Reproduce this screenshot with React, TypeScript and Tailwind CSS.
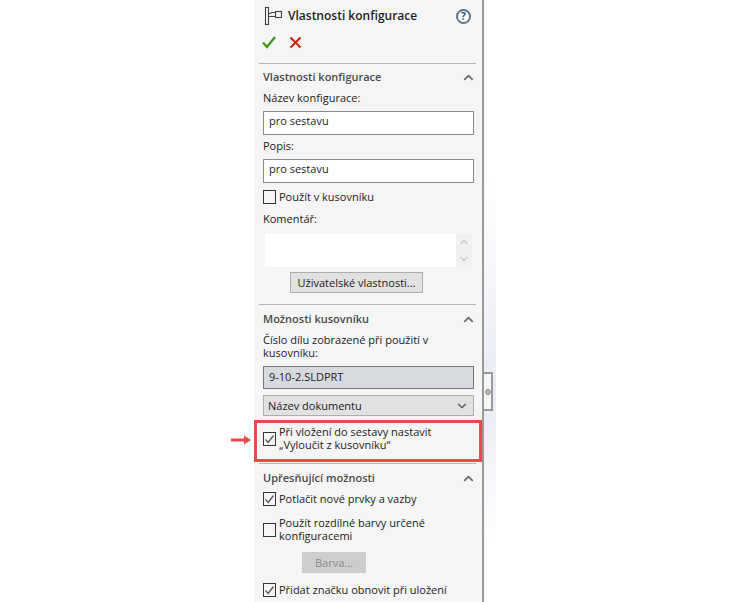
import { ChevronUp, ChevronDown } from 'lucide-react';

const Section = ({ title }: { title: string }) => (
  <div className="flex items-center justify-between h-[18px] -mr-[2px]">
    <span className="font-semibold text-[#4a4a4a]">{title}</span>
    <ChevronUp size={15} strokeWidth={3} className="text-[#707070]" />
  </div>
);

const Box = ({ children, checked }: { children: React.ReactNode; checked?: boolean }) => (
  <div className="flex items-center gap-[3px]">
    <div className="w-[13px] h-[14px] border border-[#333] bg-[#f5f5f5] shrink-0 flex items-center justify-center">
      {checked && (
        <svg width="11" height="11" viewBox="0 0 11 11" fill="none">
          <path d="M1.5 5.5 L4.2 8.5 L9.5 1.5" stroke="#555" strokeWidth="1.3" />
        </svg>
      )}
    </div>
    <span className="leading-[13px] -translate-y-px">{children}</span>
  </div>
);

export default function App() {
  return (
    <div className="w-[750px] h-[602px] bg-white overflow-hidden flex pl-[254px] relative font-['Open_Sans','Noto_Sans',sans-serif] text-[11px] text-[#222]">
      <div className="w-[230px] h-[602px] bg-[#f5f5f5] border-r-2 border-[#9a9a9a] flex flex-col pl-[9px] pr-[8px]">
        <div className="flex items-center h-[30px] pt-[2px]">
          <svg width="20" height="20" viewBox="0 0 20 20" fill="none" stroke="#444" strokeWidth="1.1" className="ml-[1px] shrink-0">
            <rect x="1.5" y="1.5" width="3" height="17" fill="#f5f5f5" />
            <path d="M4.5 10.5 H11 M4.5 8 L8 6.5 H11" />
            <rect x="11.5" y="5.5" width="6" height="6" fill="#f5f5f5" />
          </svg>
          <span className="ml-[4px] font-semibold text-[12px] text-[#1e1e1e]">Vlastnosti konfigurace</span>
          <div className="ml-auto mr-[3px] w-[15px] h-[15px] rounded-full border-2 border-[#5a7488] flex items-center justify-center text-[10px] font-bold text-[#35566f] leading-none bg-white">?</div>
        </div>
        <div className="flex items-center gap-[13px] h-[22px] mt-[1px] -ml-[1px]">
          <svg width="14" height="14" viewBox="0 0 14 14" fill="none">
            <path d="M1 7.5 L5 12 L13 2" stroke="#3f9b1f" strokeWidth="2.4" />
          </svg>
          <svg width="13" height="13" viewBox="0 0 13 13" fill="none">
            <path d="M1.5 1.5 L11.5 11.5 M11.5 1.5 L1.5 11.5" stroke="#c8220e" strokeWidth="2" />
          </svg>
        </div>
        <div className="h-px bg-[#b5b5b5] -ml-[4px] -mr-[2px] mt-[10px]" />
        <div className="mt-[4px]">
          <Section title="Vlastnosti konfigurace" />
        </div>
        <div className="mt-[5px] h-[14px] leading-[14px]">Název konfigurace:</div>
        <div className="mt-[6px] h-[24px] border border-[#8a8a8a] bg-white pl-[5px] leading-[17px]">pro sestavu</div>
        <div className="mt-[4px] h-[14px] leading-[14px]">Popis:</div>
        <div className="mt-[6px] h-[24px] border border-[#8a8a8a] bg-white pl-[5px] leading-[17px]">pro sestavu</div>
        <div className="mt-[7px]">
          <Box>Použít v kusovníku</Box>
        </div>
        <div className="mt-[8px] h-[14px] leading-[14px]">Komentář:</div>
        <div className="mt-[8px] ml-[2px] mr-[2px] h-[33px] bg-white flex justify-end">
          <div className="w-[16px] bg-[#f0f0f0] flex flex-col items-center justify-between py-[2px] text-[#c8c8c8]">
            <ChevronUp size={12} strokeWidth={3} />
            <ChevronDown size={12} strokeWidth={3} />
          </div>
        </div>
        <div className="mt-[5px] ml-[27px] w-[133px] h-[21px] bg-[#e1e1e1] border border-[#adadad] text-center leading-[19px]">Uživatelské vlastnosti...</div>
        <div className="h-px bg-[#b5b5b5] -ml-[4px] -mr-[2px] mt-[11px]" />
        <div className="mt-[5px]">
          <Section title="Možnosti kusovníku" />
        </div>
        <div className="mt-[5px] leading-[13px]">Číslo dílu zobrazené při použití v kusovníku:</div>
        <div className="mt-[7px] h-[23px] border border-[#777] bg-[#d6d9dd] pl-[5px] leading-[19px]">9-10-2.SLDPRT</div>
        <div className="mt-[6px] h-[21px] border border-[#adadad] bg-[#e1e1e1] pl-[4px] pr-[4px] pt-[1px] flex items-center justify-between">
          <span>Název dokumentu</span>
          <ChevronDown size={14} className="text-[#555]" />
        </div>
        <div className="mt-[4px] -ml-[9px] -mr-[8px] h-[42px] border-[3px] border-[#ea4a49] pl-[6px] pt-[3px]">
          <Box checked>
            <div className="w-[170px]">Při vložení do sestavy nastavit „Vyloučit z kusovníku“</div>
          </Box>
        </div>
        <div className="h-px bg-[#b5b5b5] -ml-[4px] -mr-[2px] mt-[1px]" />
        <div className="mt-[5px]">
          <Section title="Upřesňující možnosti" />
        </div>
        <div className="mt-[5px]">
          <Box checked>Potlačit nové prvky a vazby</Box>
        </div>
        <div className="mt-[11px]">
          <Box>Použít rozdílné barvy určené konfiguracemi</Box>
        </div>
        <div className="mt-[9px] ml-[39px] w-[64px] h-[21px] bg-[#cdcdcd] text-center leading-[21px] text-[#8a8a8a]">Barva...</div>
        <div className="mt-[10px]">
          <Box checked>Přidat značku obnovit při uložení</Box>
        </div>
      </div>
      <div className="w-[12px] h-[602px] bg-linear-to-b from-white from-30% via-[#e8ebf3] via-65% to-white to-90%" />
      {/* uchyt panelu */}
      <div className="absolute left-[484px] top-[372px] w-[9px] h-[39px] bg-[#f5f5f5] border-y-2 border-r-2 border-[#9a9a9a] flex items-center justify-center">
        <div className="w-[6px] h-[6px] rounded-full bg-[#b0b0b0] border border-[#999]" />
      </div>
      <svg className="absolute left-[231px] top-[434px]" width="20" height="12" viewBox="0 0 20 12" fill="#ea4a49">
        <path d="M0 4.5 H13 V1.5 L20 6 L13 10.5 V7.5 H0 Z" />
      </svg>
    </div>
  );
}
